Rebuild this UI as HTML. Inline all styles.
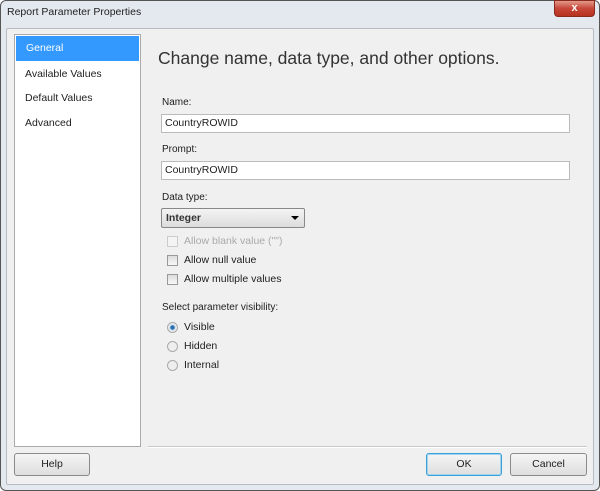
<!DOCTYPE html>
<html><head><style>
*{margin:0;padding:0;box-sizing:border-box}
body{width:600px;height:491px;background:#fff;font-family:"Liberation Sans",sans-serif;font-size:11px;color:#1e1e1e;position:relative;overflow:hidden}
.win{position:absolute;left:0;top:0;width:600px;height:491px;background:#e4e9ef;border:1px solid #555;border-radius:6px}
.title{position:absolute;left:7px;top:6px;font-size:10.5px;color:#222}
.close{position:absolute;left:554px;top:0;width:41px;height:17px;border-radius:0 0 4px 4px;background:linear-gradient(#e29a8a,#c8463a 50%,#b5321f);border:1px solid #8a2a1f;color:#fff;font-size:11px;font-weight:bold;text-align:center;line-height:15px}
.inner{position:absolute;left:6px;top:28px;width:588px;height:457px;background:#f0f0f0;border:1px solid #b8bcc2;border-radius:2px}
.left{position:absolute;left:14px;top:34px;width:127px;height:413px;background:#fff;border:1px solid #aaa}
.left div{height:24.5px;line-height:24px;padding-left:10px;font-size:10.5px}
.left .sel{background:#3399ff;color:#fff;margin:1px}
.h{position:absolute;left:158px;top:48px;font-size:17.5px;color:#333}
.lbl{position:absolute;left:162px;font-size:10px}
.inp{position:absolute;left:161px;width:409px;height:19px;background:#fff;border:1px solid #bbb;padding-left:3px;line-height:17px;font-size:10.5px}
.dd{position:absolute;left:161px;top:208px;width:144px;height:20px;border:1px solid #888;border-radius:2px;background:linear-gradient(#f4f4f4,#dcdcdc);padding-left:4px;line-height:18px;font-size:10.5px;font-weight:bold;color:#333}
.dd:after{content:"";position:absolute;right:5px;top:7px;border:4px solid transparent;border-top:4px solid #000}
.cb{position:absolute;left:167px;width:11px;height:11px;border:1px solid #999;background:linear-gradient(#ddd,#f8f8f8)}
.rb{position:absolute;left:167px;width:11px;height:11px;border:1px solid #aaa;border-radius:50%;background:#eee}
.t{position:absolute;left:184px;font-size:10.5px}
.sep{position:absolute;left:148px;top:446px;width:439px;height:2px;border-top:1px solid #c8c8c8;border-bottom:1px solid #fff}
.btn{position:absolute;top:453px;height:23px;border:1px solid #8a8a8a;border-radius:3px;background:linear-gradient(#f5f5f5,#dedede);text-align:center;line-height:21px;font-size:10.5px}
</style></head><body>
<div class="win"></div>
<div class="title">Report Parameter Properties</div>
<div class="close">x</div>
<div class="inner"></div>
<div class="left">
<div class="sel">General</div>
<div>Available Values</div>
<div>Default Values</div>
<div>Advanced</div>
</div>
<div class="h">Change name, data type, and other options.</div>
<div class="lbl" style="top:97px">Name:</div>
<div class="inp" style="top:114px">CountryROWID</div>
<div class="lbl" style="top:144px">Prompt:</div>
<div class="inp" style="top:161px">CountryROWID</div>
<div class="lbl" style="top:192px">Data type:</div>
<div class="dd">Integer</div>
<div class="cb" style="top:236px;border-color:#ccc;background:#f4f4f4"></div><div class="t" style="top:235px;color:#aaa">Allow blank value ("")</div>
<div class="cb" style="top:255px"></div><div class="t" style="top:254px">Allow null value</div>
<div class="cb" style="top:274px"></div><div class="t" style="top:273px">Allow multiple values</div>
<div class="lbl" style="top:302px">Select parameter visibility:</div>
<div class="rb" style="top:322px;background:radial-gradient(#2a6fb0 30%,#cfe0ee 40%,#eee 70%)"></div><div class="t" style="top:321px">Visible</div>
<div class="rb" style="top:341px"></div><div class="t" style="top:340px">Hidden</div>
<div class="rb" style="top:360px"></div><div class="t" style="top:359px">Internal</div>
<div class="sep"></div>
<div class="btn" style="left:14px;width:76px">Help</div>
<div class="btn" style="left:426px;width:76px;border-color:#3c9fd8;box-shadow:inset 0 0 0 1px #9fd3f0">OK</div>
<div class="btn" style="left:510px;width:77px">Cancel</div>
</body></html>
